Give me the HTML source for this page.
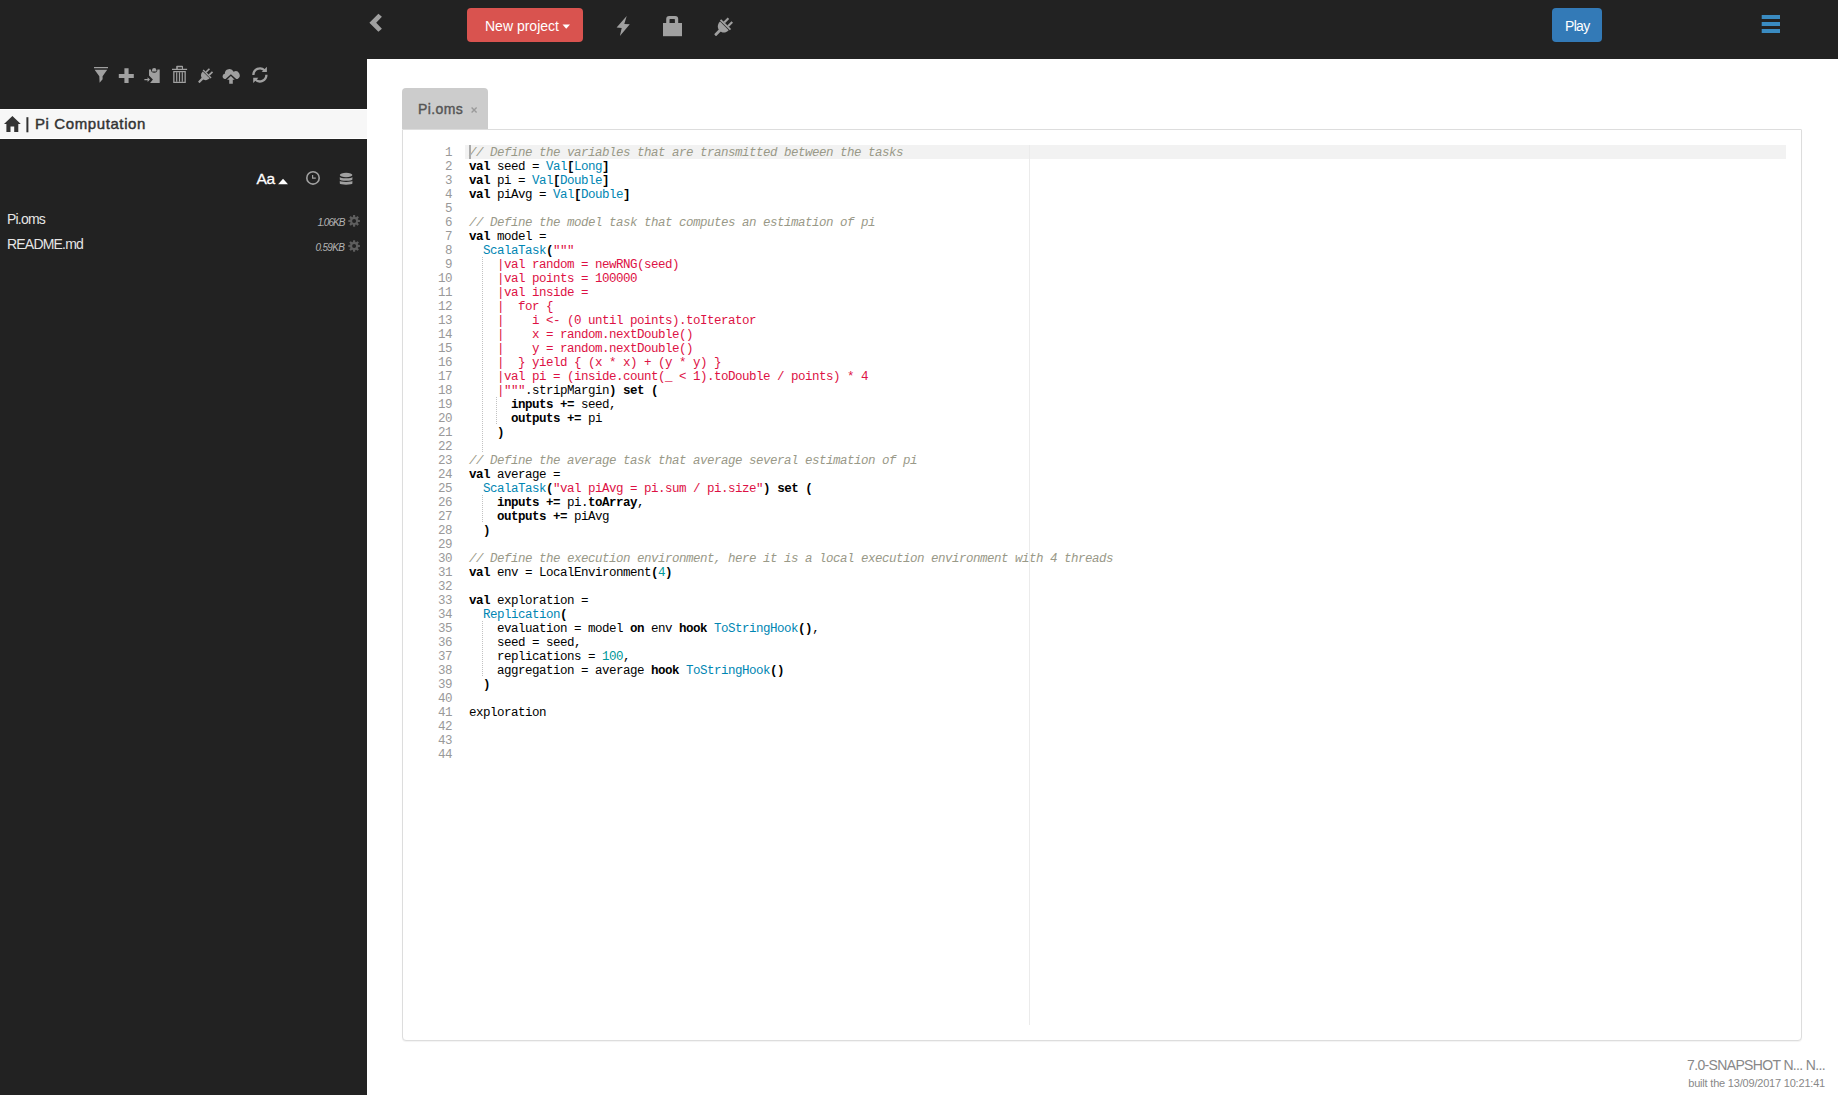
<!DOCTYPE html>
<html><head><meta charset="utf-8">
<style>
html,body{margin:0;padding:0;width:1838px;height:1095px;overflow:hidden;background:#fff;font-family:"Liberation Sans",sans-serif;}
.abs{position:absolute;}
#top{position:absolute;left:0;top:0;width:1838px;height:59px;background:#222;}
#side{position:absolute;left:0;top:0;width:367px;height:1095px;background:#222;}
#main{position:absolute;left:367px;top:59px;width:1471px;height:1036px;background:#fff;}
.ico{position:absolute;fill:#999;}
#crumb{position:absolute;left:0;top:109px;width:367px;height:28px;background:#f7f7f7;border-top:1px solid #fff;border-bottom:1px solid #fff;}
#crumbtxt{position:absolute;left:35px;top:115px;font-size:15px;letter-spacing:0.6px;-webkit-text-stroke:0.45px #333;color:#333;white-space:nowrap;}
.file{position:absolute;left:7px;font-size:14px;letter-spacing:-0.8px;color:#e6e6e6;white-space:nowrap;}
.size{position:absolute;font-size:10px;letter-spacing:-0.7px;font-style:italic;color:#b4b4b4;white-space:nowrap;}
#btnnew{position:absolute;left:467px;top:8px;width:116px;height:34px;background:#d9534f;border-radius:4px;}
#btnplay{position:absolute;left:1552px;top:8px;width:50px;height:34px;background:#337ab7;border-radius:4px;}
.btxt{position:absolute;color:#fff;font-size:14px;white-space:nowrap;}
#tab{position:absolute;left:402px;top:88px;width:86px;height:41px;background:#ccc;border-radius:4px 4px 0 0;}
#panel{position:absolute;left:402px;top:129px;width:1398px;height:910px;border:1px solid #ddd;border-radius:0 1px 4px 4px;background:#fff;box-shadow:0 1px 1px rgba(0,0,0,.05);}
#ed{position:absolute;left:418px;top:145px;width:1368px;height:880px;overflow:hidden;}
#gut{position:absolute;left:0;top:1px;width:47px;}
.g{height:14px;line-height:14px;text-align:right;padding-right:13px;color:#999;font-family:"Liberation Mono",monospace;font-size:12.5px;letter-spacing:-0.5px;}
#codebox{position:absolute;left:51px;top:1px;}
.l{height:14px;line-height:14px;white-space:pre;font-family:"Liberation Mono",monospace;font-size:12.5px;letter-spacing:-0.5px;color:#000;}
.k,.p{font-weight:bold;}
.t{color:#0086b3;}
.s{color:#d14;}
.n{color:#099;}
.c{color:#998;font-style:italic;}
#active{position:absolute;left:47px;top:0;width:1321px;height:14px;background:#f2f2f2;}
#pm{position:absolute;left:611px;top:0;width:1px;height:880px;background:#ebebeb;}
.guide{position:absolute;width:1px;background-image:linear-gradient(#c2c2c2 50%,transparent 50%);background-size:1px 2px;}
#cursor{position:absolute;left:51px;top:0;width:2px;height:14px;background:#aaa;}
#ver{position:absolute;right:13px;top:1057px;font-size:14px;letter-spacing:-0.65px;color:#888;white-space:nowrap;}
#built{position:absolute;right:13px;top:1077px;font-size:11px;letter-spacing:-0.2px;color:#888;white-space:nowrap;}
</style></head><body>
<div id="top"></div>
<div id="side"></div>
<div id="main"></div>
<!--SIDEBAR-->
<div id="crumb"></div>
<div id="crumbtxt">Pi Computation</div>
<div class="abs" style="left:256.5px;top:170px;font-size:15.5px;letter-spacing:-0.4px;-webkit-text-stroke:0.3px #fff;color:#fff;">Aa</div>
<div class="file" style="top:211px">Pi.oms</div>
<div class="file" style="top:236px">README.md</div>
<div class="size" style="left:317.5px;top:217px;letter-spacing:-1px">1.06KB</div>
<div class="size" style="left:315.5px;top:242px">0.59KB</div>
<!--HEADER-->
<div id="btnnew"></div>
<div class="btxt" style="left:485px;top:18px">New project</div>
<div id="btnplay"></div>
<div class="btxt" style="left:1565px;top:18px;letter-spacing:-0.7px">Play</div>
<!--TAB-->
<div id="panel"></div>
<div id="tab"></div>
<div class="abs" style="left:418px;top:101px;font-size:14px;letter-spacing:0.4px;-webkit-text-stroke:0.4px #555;color:#555;">Pi.oms</div>

<div id="ed">
<div id="active"></div>
<div id="pm"></div>
<div class="guide" style="left:64px;top:112px;height:196px"></div><div class="guide" style="left:78px;top:252px;height:28px"></div><div class="guide" style="left:64px;top:350px;height:28px"></div><div class="guide" style="left:64px;top:476px;height:56px"></div>
<div id="gut"><div class="g">1</div><div class="g">2</div><div class="g">3</div><div class="g">4</div><div class="g">5</div><div class="g">6</div><div class="g">7</div><div class="g">8</div><div class="g">9</div><div class="g">10</div><div class="g">11</div><div class="g">12</div><div class="g">13</div><div class="g">14</div><div class="g">15</div><div class="g">16</div><div class="g">17</div><div class="g">18</div><div class="g">19</div><div class="g">20</div><div class="g">21</div><div class="g">22</div><div class="g">23</div><div class="g">24</div><div class="g">25</div><div class="g">26</div><div class="g">27</div><div class="g">28</div><div class="g">29</div><div class="g">30</div><div class="g">31</div><div class="g">32</div><div class="g">33</div><div class="g">34</div><div class="g">35</div><div class="g">36</div><div class="g">37</div><div class="g">38</div><div class="g">39</div><div class="g">40</div><div class="g">41</div><div class="g">42</div><div class="g">43</div><div class="g">44</div></div>
<div id="codebox"><div class="l"><span class="c">// Define the variables that are transmitted between the tasks</span></div>
<div class="l"><span class="k">val</span> seed = <span class="t">Val</span><span class="p">[</span><span class="t">Long</span><span class="p">]</span></div>
<div class="l"><span class="k">val</span> pi = <span class="t">Val</span><span class="p">[</span><span class="t">Double</span><span class="p">]</span></div>
<div class="l"><span class="k">val</span> piAvg = <span class="t">Val</span><span class="p">[</span><span class="t">Double</span><span class="p">]</span></div>
<div class="l"></div>
<div class="l"><span class="c">// Define the model task that computes an estimation of pi</span></div>
<div class="l"><span class="k">val</span> model =</div>
<div class="l">  <span class="t">ScalaTask</span><span class="p">(</span><span class="s">&quot;&quot;&quot;</span></div>
<div class="l">    <span class="s">|val random = newRNG(seed)</span></div>
<div class="l">    <span class="s">|val points = 100000</span></div>
<div class="l">    <span class="s">|val inside =</span></div>
<div class="l">    <span class="s">|  for {</span></div>
<div class="l">    <span class="s">|    i &lt;- (0 until points).toIterator</span></div>
<div class="l">    <span class="s">|    x = random.nextDouble()</span></div>
<div class="l">    <span class="s">|    y = random.nextDouble()</span></div>
<div class="l">    <span class="s">|  } yield { (x * x) + (y * y) }</span></div>
<div class="l">    <span class="s">|val pi = (inside.count(_ &lt; 1).toDouble / points) * 4</span></div>
<div class="l">    <span class="s">|&quot;&quot;&quot;</span>.stripMargin<span class="p">)</span> <span class="k">set</span> <span class="p">(</span></div>
<div class="l">      <span class="k">inputs</span> <span class="k">+=</span> seed,</div>
<div class="l">      <span class="k">outputs</span> <span class="k">+=</span> pi</div>
<div class="l">    <span class="p">)</span></div>
<div class="l"></div>
<div class="l"><span class="c">// Define the average task that average several estimation of pi</span></div>
<div class="l"><span class="k">val</span> average =</div>
<div class="l">  <span class="t">ScalaTask</span><span class="p">(</span><span class="s">&quot;val piAvg = pi.sum / pi.size&quot;</span><span class="p">)</span> <span class="k">set</span> <span class="p">(</span></div>
<div class="l">    <span class="k">inputs</span> <span class="k">+=</span> pi.<span class="k">toArray</span>,</div>
<div class="l">    <span class="k">outputs</span> <span class="k">+=</span> piAvg</div>
<div class="l">  <span class="p">)</span></div>
<div class="l"></div>
<div class="l"><span class="c">// Define the execution environment, here it is a local execution environment with 4 threads</span></div>
<div class="l"><span class="k">val</span> env = LocalEnvironment<span class="p">(</span><span class="n">4</span><span class="p">)</span></div>
<div class="l"></div>
<div class="l"><span class="k">val</span> exploration =</div>
<div class="l">  <span class="t">Replication</span><span class="p">(</span></div>
<div class="l">    evaluation = model <span class="k">on</span> env <span class="k">hook</span> <span class="t">ToStringHook</span><span class="p">()</span>,</div>
<div class="l">    seed = seed,</div>
<div class="l">    replications = <span class="n">100</span>,</div>
<div class="l">    aggregation = average <span class="k">hook</span> <span class="t">ToStringHook</span><span class="p">()</span></div>
<div class="l">  <span class="p">)</span></div>
<div class="l"></div>
<div class="l">exploration</div>
<div class="l"></div>
<div class="l"></div>
<div class="l"></div></div>
<div id="cursor"></div>
</div>
<div id="ver">7.0-SNAPSHOT N... N...</div>
<div id="built">built the 13/09/2017 10:21:41</div>
<svg style="position:absolute;left:0;top:0" width="1838" height="1095" viewBox="0 0 1838 1095"><path d="M369.4,22.8 L378.4,13.75 L381.9,16.8 L376.2,22.8 L381.9,28.7 L378.4,31.8 Z" fill="#a0a0a0" /><path d="M626.7,16 L624.3,23.9 L629.8,24.3 L619.9,35.9 L621.7,28 L616.6,27.6 Z" fill="#a0a0a0" /><path d="M663,23 H682 V36.2 H663 Z" fill="#a0a0a0" /><path d="M666.2,23 V19 A3,3 0 0 1 669.2,16 H675.2 A3,3 0 0 1 678.2,19 V23 H674.9 V19.6 Q674.9,18.9 674.2,18.9 H670.2 Q669.5,18.9 669.5,19.6 V23 Z" fill="#a0a0a0" /><g transform="translate(725.50,24.75) rotate(45) scale(1.000)" fill="#a0a0a0"><rect x="-1.4" y="7" width="2.8" height="7.8" rx="0.8"/><path d="M-6.1,1.6 H6.1 C6.1,5.6 3.6,8.4 0,8.4 C-3.6,8.4 -6.1,5.6 -6.1,1.6 Z"/><rect x="-7" y="-0.9" width="14" height="1.8"/><rect x="-3.6" y="-6.7" width="2.1" height="6"/><rect x="1.8" y="-6.7" width="2.1" height="6"/></g><g transform="translate(207.10,74.00) rotate(45) scale(0.800)" fill="#a0a0a0"><rect x="-1.4" y="7" width="2.8" height="7.8" rx="0.8"/><path d="M-6.1,1.6 H6.1 C6.1,5.6 3.6,8.4 0,8.4 C-3.6,8.4 -6.1,5.6 -6.1,1.6 Z"/><rect x="-7" y="-0.9" width="14" height="1.8"/><rect x="-3.6" y="-6.7" width="2.1" height="6"/><rect x="1.8" y="-6.7" width="2.1" height="6"/></g><path d="M94,67 H108 V68.2 H94 Z M94.6,69.8 H107.2 L102.6,76.3 V79.3 L99.6,82.8 L99.3,76.3 Z" fill="#a0a0a0" /><path d="M124.4,68.2 H128.6 V74 H133.8 V78 H128.6 V82.9 H124.4 V78 H118.8 V74 H124.4 Z" fill="#a0a0a0" /><path d="M149,69.6 H151 A3.2,3.2 0 0 0 157.4,69.6 H159.7 V82.9 H150.1 L152.9,79.5 L149,75.6 Z" fill="#a0a0a0" /><path d="M152,71.5 V70.2 A2.2,2.2 0 0 1 156.4,70.2 V71.5 Z" fill="#a0a0a0" /><path d="M144.4,79.1 H147.6 V77.3 L150,79.6 L147.6,81.9 V80.2 H144.4 Z" fill="#a0a0a0" /><path d="M172,68.8 H176.2 V66.5 Q176.2,65.75 177,65.75 H182.2 Q183,65.75 183,66.5 V68.8 H187.1 V70 H172 Z M177.8,68.8 H181.9 V67.3 H177.8 Z" fill="#a0a0a0" fill-rule="evenodd"/><path d="M173.2,71 H185.8 V82.9 H173.2 Z M174.5,72.2 V81.7 H184.5 V72.2 Z" fill="#a0a0a0" fill-rule="evenodd"/><path d="M176.1,72.2 H177.3 V81.7 H176.1 Z" fill="#a0a0a0" /><path d="M178.9,72.2 H180.1 V81.7 H178.9 Z" fill="#a0a0a0" /><path d="M181.7,72.2 H182.9 V81.7 H181.7 Z" fill="#a0a0a0" /><path d="M224.5,78.9 A2.6,2.6 0 0 1 224.8,73.8 A4.6,4.6 0 0 1 233.6,71.8 A3.6,3.6 0 0 1 237.6,78.9 H236.2 L230.9,74.2 L225.6,78.9 Z" fill="#a0a0a0" /><path d="M227,79.7 L230.9,75.9 L234.7,79.7 H232.8 V83.8 H229.2 V79.7 Z" fill="#a0a0a0" /><path d="M253.4,75 A6.5,6.5 0 0 1 264.5,70.3" stroke="#a0a0a0" stroke-width="2.3" fill="none"/><path d="M266.9,66.8 V72.05 H261.7 Z" fill="#a0a0a0" /><path d="M266.4,74.8 A6.5,6.5 0 0 1 255.3,79.5" stroke="#a0a0a0" stroke-width="2.3" fill="none"/><path d="M253.2,77.8 V83 L258.4,77.8 Z" fill="#a0a0a0" /><path d="M12.4,115.9 L20.8,124.1 L18.3,124.1 L18.3,131.9 L14.2,131.9 L14.2,126.6 L10.5,126.6 L10.5,131.9 L6.4,131.9 L6.4,124.1 L4.0,124.1 Z" fill="#333" /><path d="M26.4,117.2 H28.4 V132.3 H26.4 Z" fill="#333" /><path d="M278.1,184.2 L283.05,178.8 L288,184.2 Z" fill="#fff" /><circle cx="313" cy="177.9" r="6.2" stroke="#a0a0a0" stroke-width="1.6" fill="none"/><path d="M312,174.9 H313.2 V177.6 H315.8 V178.8 H312 Z" fill="#a0a0a0" /><ellipse cx="346.1" cy="175" rx="6.3" ry="2.2" fill="#a0a0a0"/><path d="M339.8,177.0 A6.3,1.3 0 0 0 352.4,177.0 V179.5 A6.3,1.3 0 0 1 339.8,179.5 Z" fill="#a0a0a0" /><path d="M339.8,180.7 A6.3,1.3 0 0 0 352.4,180.7 V183.4 A6.3,1.3 0 0 1 339.8,183.4 Z" fill="#a0a0a0" /><path d="M353.10,215.09 L355.10,215.09 L355.31,216.98 L356.01,217.27 L357.51,216.08 L358.92,217.49 L357.73,218.99 L358.02,219.69 L359.91,219.90 L359.91,221.90 L358.02,222.11 L357.73,222.81 L358.92,224.31 L357.51,225.72 L356.01,224.53 L355.31,224.82 L355.10,226.71 L353.10,226.71 L352.89,224.82 L352.19,224.53 L350.69,225.72 L349.28,224.31 L350.47,222.81 L350.18,222.11 L348.29,221.90 L348.29,219.90 L350.18,219.69 L350.47,218.99 L349.28,217.49 L350.69,216.08 L352.19,217.27 L352.89,216.98 Z M356.10,220.90 A2.0,2.0 0 1 0 352.10,220.90 A2.0,2.0 0 1 0 356.10,220.90 Z" fill="#5e5e5e" fill-rule="evenodd"/><path d="M353.10,240.19 L355.10,240.19 L355.31,242.08 L356.01,242.37 L357.51,241.18 L358.92,242.59 L357.73,244.09 L358.02,244.79 L359.91,245.00 L359.91,247.00 L358.02,247.21 L357.73,247.91 L358.92,249.41 L357.51,250.82 L356.01,249.63 L355.31,249.92 L355.10,251.81 L353.10,251.81 L352.89,249.92 L352.19,249.63 L350.69,250.82 L349.28,249.41 L350.47,247.91 L350.18,247.21 L348.29,247.00 L348.29,245.00 L350.18,244.79 L350.47,244.09 L349.28,242.59 L350.69,241.18 L352.19,242.37 L352.89,242.08 Z M356.10,246.00 A2.0,2.0 0 1 0 352.10,246.00 A2.0,2.0 0 1 0 356.10,246.00 Z" fill="#5e5e5e" fill-rule="evenodd"/><path d="M1761.7,15 H1780 V19 H1761.7 Z" fill="#3a8bc1" /><path d="M1761.7,22 H1780 V26 H1761.7 Z" fill="#3a8bc1" /><path d="M1761.7,29 H1780 V33 H1761.7 Z" fill="#3a8bc1" /><path d="M471.6,107.6 L476.6,112.6 M476.6,107.6 L471.6,112.6" stroke="#9a9a9a" stroke-width="1.4"/><path d="M562.5,24.5 H570 L566.25,28.8 Z" fill="#fff" /></svg>
</body></html>
